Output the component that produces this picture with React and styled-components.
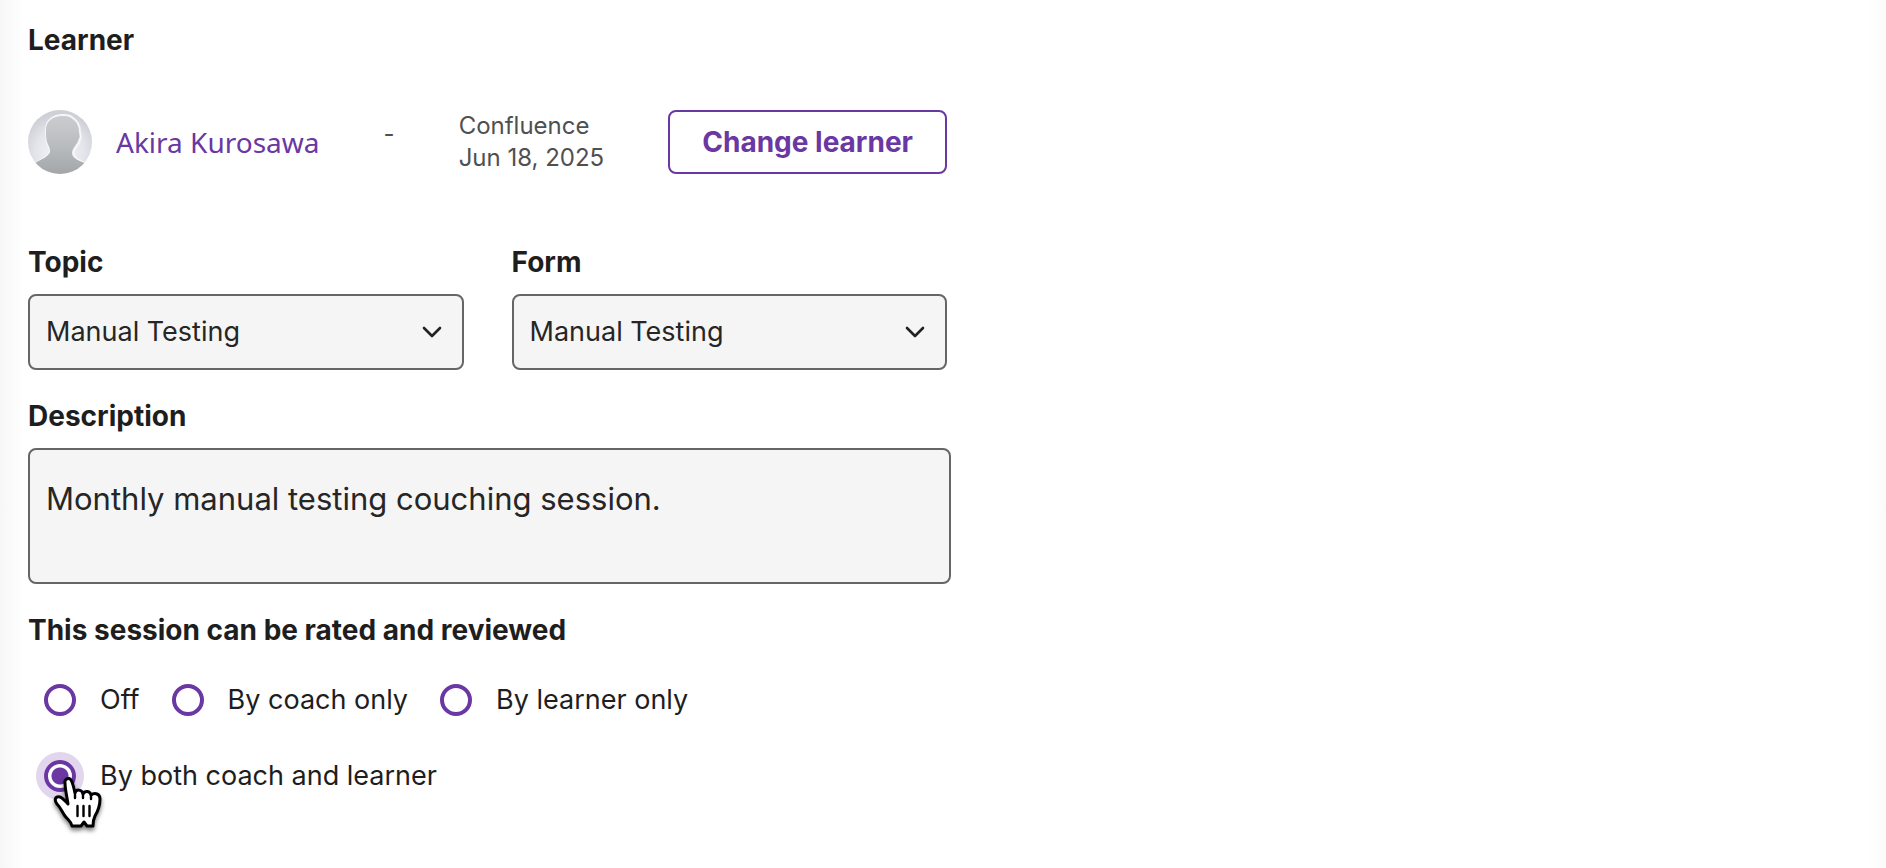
import React, { useState } from 'react';
import styled, { createGlobalStyle } from 'styled-components';

const purple = '#6a37a3';
const ink = '#1e1e1e';
const sans = 'Inter, "Liberation Sans", sans-serif';

const GlobalStyle = createGlobalStyle`
  *, *::before, *::after { box-sizing: border-box; }
  body { margin: 0; background: #fff; color: ${ink}; font-family: ${sans}; }
`;

const Page = styled.main`
  min-height: 100vh;
  padding: 22px 28px 68px;
  background:
    linear-gradient(to right, #f7f7f7, rgba(255, 255, 255, 0) 24px),
    linear-gradient(to left, #fafafa, rgba(255, 255, 255, 0) 18px),
    #fff;
`;

const Form = styled.form`
  display: flex;
  flex-direction: column;
  gap: 28px;
  max-width: 923px;
`;

const labelText = `
  margin: 0;
  padding: 0;
  font-size: 28px;
  font-weight: 700;
  line-height: 36px;
`;

const Title = styled.h2`${labelText}`;
const Label = styled.label`${labelText}`;
const Legend = styled.legend`${labelText}`;

const LearnerSection = styled.section`
  display: flex;
  flex-direction: column;
  gap: 52px;
  max-width: 919px;
  margin-bottom: 42px;
`;

const LearnerRow = styled.div`
  display: flex;
  align-items: center;
  justify-content: space-between;
`;

const Person = styled.div`
  display: flex;
  align-items: center;
  gap: 24px;
`;

const PersonLink = styled.a`
  color: ${purple};
  font-family: "Noto Sans", sans-serif;
  font-size: 28px;
  line-height: 36px;
  text-decoration: none;
`;

const Details = styled.p`
  margin: 0;
  color: #505050;
  font-size: 24px;
  line-height: 32px;
`;

const Separator = styled(Details)`
  padding-bottom: 16px;
`;

const ChangeButton = styled.button`
  height: 64px;
  padding: 0 32px;
  border: 2px solid ${purple};
  border-radius: 8px;
  background: #fff;
  color: ${purple};
  font: 700 28px/36px ${sans};
  cursor: pointer;
`;

const FieldRow = styled.div`
  display: grid;
  grid-template-columns: 1fr 1fr;
  gap: 48px;
  max-width: 919px;
`;

const Field = styled.div`
  display: flex;
  flex-direction: column;
  gap: 14px;
`;

const SelectBox = styled.div`
  position: relative;
  display: flex;
`;

const Select = styled.select`
  appearance: none;
  width: 100%;
  height: 76px;
  padding: 0 64px 0 16px;
  border: 2px solid #666;
  border-radius: 8px;
  background: #f5f5f5;
  color: #262626;
  font: 400 27px/36px ${sans};
`;

const Chevron = styled.svg`
  position: absolute;
  top: 32px;
  right: 22px;
  width: 20px;
  height: 12px;
  pointer-events: none;
`;

const TextArea = styled.textarea`
  display: block;
  width: 100%;
  height: 136px;
  padding: 28px 16px;
  border: 2px solid #666;
  border-radius: 8px;
  background: #f5f5f5;
  color: #262626;
  font: 400 31px/42px ${sans};
  resize: none;
`;

const RatingGroup = styled.fieldset`
  min-width: 0;
  margin: 0;
  padding: 0;
  border: 0;
`;

const Options = styled.div`
  display: flex;
  flex-wrap: wrap;
  gap: 28px 32px;
  padding: 28px 0 0 16px;
`;

const Option = styled.label`
  position: relative;
  display: flex;
  align-items: center;
  gap: 24px;
  height: 48px;
  font-size: 27px;
  line-height: 36px;
`;

const Radio = styled.input`
  appearance: none;
  width: 32px;
  height: 32px;
  margin: 0;
  border: 4px solid ${purple};
  border-radius: 50%;
  background: #fff;

  &:checked {
    background: radial-gradient(circle, ${purple} 0 8px, #fff 9px);
    box-shadow: 0 0 0 8px #e1d6ee;
  }
`;

const Pointer = styled.svg`
  position: absolute;
  left: 8px;
  top: 25px;
  width: 52px;
  height: 62px;
  overflow: visible;
  pointer-events: none;
  filter: drop-shadow(0 3px 2px rgba(0, 0, 0, 0.5));
`;

function Avatar() {
  return (
    <svg width="64" height="64" viewBox="0 0 64 64" role="img" aria-label="Akira Kurosawa">
      <defs>
        <radialGradient id="backdrop" cx="0.5" cy="0.65" r="0.6">
          <stop offset="0" stopColor="#f7f7fa" />
          <stop offset="0.65" stopColor="#e3e4ea" />
          <stop offset="1" stopColor="#cfd0d7" />
        </radialGradient>
        <linearGradient id="figure" x1="0" y1="0" x2="0" y2="1">
          <stop offset="0" stopColor="#cbccd0" />
          <stop offset="0.5" stopColor="#b9bcbf" />
          <stop offset="1" stopColor="#a2a5a8" />
        </linearGradient>
        <clipPath id="round"><circle cx="32" cy="32" r="32" /></clipPath>
      </defs>
      <g clipPath="url(#round)">
        <rect width="64" height="64" fill="url(#backdrop)" />
        <path
          d="M7 53C14 49 20 47 22 42C22.500 38 20 35 19 32C18 28 18 24 18 20C18 11 25 5 35 5C39 5 43 6 45 8C51 12 52 17 52 22L53 27C51.500 29 52 31 51 33C49 36 46 38 45.500 42C45.500 47 49 50 57 53V66H7Z"
          fill="none" stroke="#f5f6f8" strokeWidth="2"
        />
        <path
          d="M7 53C14 49 20 47 22 42C22.500 38 20 35 19 32C18 28 18 24 18 20C18 11 25 6 35 6C39 6 42 7 44 9C49 12 51 17 51 22L51.500 27C50.500 29 50 31 49 33C47 36 45 38 44 42C43.500 48 49 50 57 53V66H7Z"
          fill="url(#figure)"
        />
      </g>
    </svg>
  );
}

function HandPointer() {
  return (
    <Pointer viewBox="0 0 52 62" aria-hidden="true">
      <path
        d="M13 6C12 2 17 0 19 3C21 6 22 12 23 16C24 12 30 12 31 17C33 13 38 14 39 18C43 15 48 17 48 22C48 29 46 34 43 39C41 43 41 47 41 49H35L32 45L29 49H20C19 44 16 43 13 39C10 35 9 31 5 27C2 23 3 19 8 20C11 21 14 25 16 27C15 20 13 12 13 6Z"
        fill="#fff" stroke="#000" strokeWidth="3" strokeLinejoin="round"
      />
      <path d="M23 16V21M31 17V21M39 18V22" stroke="#000" strokeWidth="2.4" strokeLinecap="round" />
      <path d="M25.500 29V39M31.500 29V39M37.500 29V39" stroke="#000" strokeWidth="2.4" strokeLinecap="round" />
    </Pointer>
  );
}

function SelectField({ id, label }) {
  return (
    <Field>
      <Label htmlFor={id}>{label}</Label>
      <SelectBox>
        <Select id={id} defaultValue="manual">
          <option value="manual">Manual Testing</option>
        </Select>
        <Chevron viewBox="0 0 20 12" aria-hidden="true">
          <path d="M2 2L10 10L18 2" fill="none" stroke="#222" strokeWidth="2.6" strokeLinecap="round" strokeLinejoin="round" />
        </Chevron>
      </SelectBox>
    </Field>
  );
}

const ratingOptions = [
  { value: 'off', text: 'Off' },
  { value: 'coach', text: 'By coach only' },
  { value: 'learner', text: 'By learner only' },
  { value: 'both', text: 'By both coach and learner' },
];

export default function App() {
  const [rating, setRating] = useState('both');

  return (
    <>
      <GlobalStyle />
      <Page>
        <Form onSubmit={(event) => event.preventDefault()}>
          <LearnerSection>
            <Title>Learner</Title>
            <LearnerRow>
              <Person>
                <Avatar />
                <PersonLink href="#learner">Akira Kurosawa</PersonLink>
              </Person>
              <Separator>-</Separator>
              <Details>
                Confluence
                <br />
                Jun 18, 2025
              </Details>
              <ChangeButton type="button">Change learner</ChangeButton>
            </LearnerRow>
          </LearnerSection>

          <FieldRow>
            <SelectField id="topic" label="Topic" />
            <SelectField id="form" label="Form" />
          </FieldRow>

          <Field>
            <Label htmlFor="description">Description</Label>
            <TextArea id="description" defaultValue="Monthly manual testing couching session." />
          </Field>

          <RatingGroup>
            <Legend>This session can be rated and reviewed</Legend>
            <Options>
              {ratingOptions.map(({ value, text }) => (
                <Option key={value}>
                  <Radio
                    type="radio"
                    name="rating"
                    value={value}
                    checked={rating === value}
                    onChange={() => setRating(value)}
                  />
                  {text}
                  {value === 'both' && <HandPointer />}
                </Option>
              ))}
            </Options>
          </RatingGroup>
        </Form>
      </Page>
    </>
  );
}
